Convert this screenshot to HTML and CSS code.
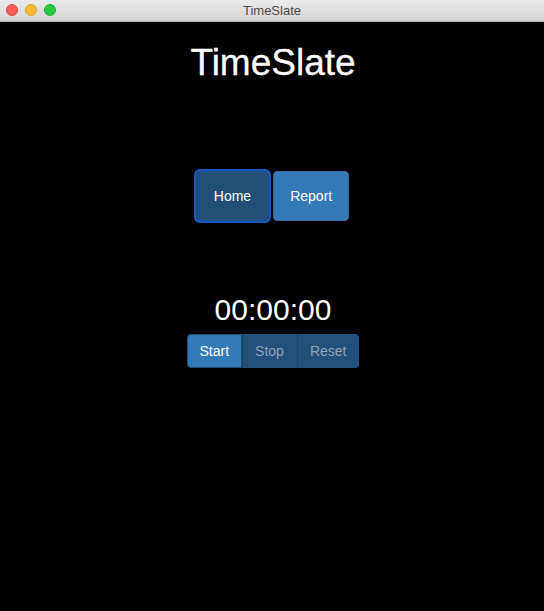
FILE: index.html
```html
<!DOCTYPE html>
<html>
<head>
<meta charset="utf-8">
<link rel="stylesheet" href="styles.css">
</head>
<body>
<div class="titlebar">
  <div class="lights">
    <span class="light red"></span>
    <span class="light yellow"></span>
    <span class="light green"></span>
  </div>
  <div class="wintitle">TimeSlate</div>
</div>
<main class="app">
  <h1 class="title">TimeSlate</h1>
  <nav class="nav">
    <button class="btn nav-btn active">Home</button>
    <button class="btn nav-btn">Report</button>
  </nav>
  <div class="timer">00:00:00</div>
  <div class="group">
    <button class="btn gbtn first">Start</button>
    <button class="btn gbtn disabled">Stop</button>
    <button class="btn gbtn disabled last">Reset</button>
  </div>
</main>
</body>
</html>
```

FILE: styles.css
```css
html, body {
  margin: 0;
  padding: 0;
  background: #000;
  height: 100%;
  font-family: "Liberation Sans", Arial, Helvetica, sans-serif;
}
.titlebar {
  position: relative;
  height: 21px;
  background: linear-gradient(#ebebeb, #d5d5d5);
  border-bottom: 1px solid #b0b0b0;
  display: flex;
  align-items: center;
  justify-content: center;
}
.lights {
  position: absolute;
  left: 6px;
  top: 4px;
  display: flex;
  gap: 7px;
}
.light {
  width: 12px;
  height: 12px;
  border-radius: 50%;
  box-sizing: border-box;
}
.red { background: #fc5f57; border: 1px solid #e0443e; }
.yellow { background: #fdbc2e; border: 1px solid #dea123; }
.green { background: #28c840; border: 1px solid #1aab29; }
.wintitle {
  font-size: 13px;
  color: #4a4a4a;
  line-height: 21px;
}
.app {
  display: flex;
  flex-direction: column;
  align-items: center;
  color: #fff;
}
.title {
  margin: 21px 0 0 2px;
  font-size: 37px;
  font-weight: normal;
  line-height: 40px;
  -webkit-text-stroke: 0.3px #fff;
}
.nav {
  margin-top: 88px;
  margin-left: 1px;
  display: flex;
  gap: 4px;
}
.btn {
  font-family: inherit;
  font-size: 14px;
  line-height: 20px;
  color: #fff;
  background: #337ab7;
  border: 1px solid #2e6da4;
  margin: 0;
  cursor: pointer;
}
.nav-btn {
  height: 50px;
  padding: 0 16px;
  border-radius: 4px;
}
.nav-btn.active {
  padding: 0 17px;
  background: #224e78;
  border-color: #1d4a80;
  box-shadow: 0 0 0 2px #1757c2;
}
.timer {
  margin-top: 72px;
  margin-left: 2px;
  font-size: 30px;
  line-height: 34px;
}
.group {
  margin-top: 7px;
  margin-left: 2px;
  display: flex;
}
.gbtn {
  height: 34px;
  padding: 0 12px;
  border-radius: 0;
  border-color: #24507b;
}
.gbtn.first {
  border-radius: 4px 0 0 4px;
}
.gbtn.last {
  border-radius: 0 4px 4px 0;
}
.gbtn.disabled {
  background: #22507a;
  color: #94a3b3;
  border-left-color: #1c4468;
}
```
